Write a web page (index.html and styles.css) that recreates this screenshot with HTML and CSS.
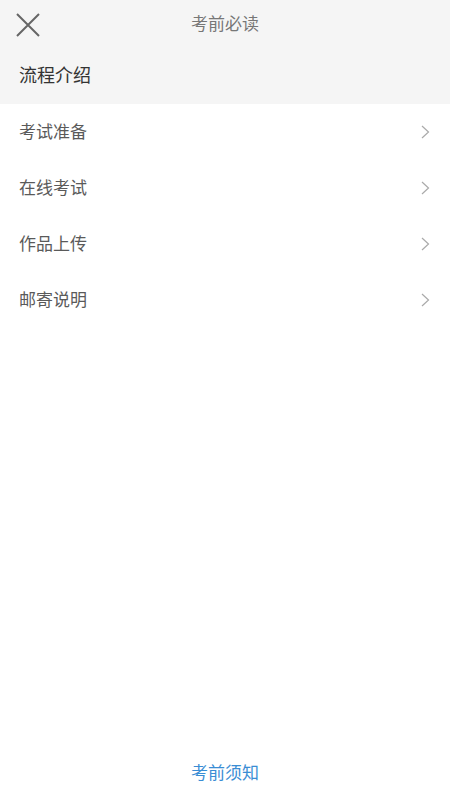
FILE: index.html
```html
<!DOCTYPE html>
<html lang="zh-CN">

<head>
    <meta charset="UTF-8">
    <meta name="viewport" content="width=device-width, initial-scale=1.0">
    <title>考前必读</title>
    <link rel="stylesheet" href="styles.css">
</head>

<body>
    <div class="page">
        <div class="top-bar">
            <span class="close-btn">
                <svg width="24" height="24" viewBox="0 0 24 24">
                    <path d="M1 1 L23 23 M23 1 L1 23" stroke="#666" stroke-width="2" fill="none" />
                </svg>
            </span>
            <h1 class="top-title">考前必读</h1>
        </div>

        <div class="section-head">流程介绍</div>

        <ul class="menu-list">
            <li class="menu-item">
                <span>考试准备</span>
                <svg class="arrow" width="9" height="14" viewBox="0 0 9 14">
                    <path d="M1 1 L7.5 7 L1 13" stroke="#aaa" stroke-width="1.2" fill="none" />
                </svg>
            </li>
            <li class="menu-item">
                <span>在线考试</span>
                <svg class="arrow" width="9" height="14" viewBox="0 0 9 14">
                    <path d="M1 1 L7.5 7 L1 13" stroke="#aaa" stroke-width="1.2" fill="none" />
                </svg>
            </li>
            <li class="menu-item">
                <span>作品上传</span>
                <svg class="arrow" width="9" height="14" viewBox="0 0 9 14">
                    <path d="M1 1 L7.5 7 L1 13" stroke="#aaa" stroke-width="1.2" fill="none" />
                </svg>
            </li>
            <li class="menu-item">
                <span>邮寄说明</span>
                <svg class="arrow" width="9" height="14" viewBox="0 0 9 14">
                    <path d="M1 1 L7.5 7 L1 13" stroke="#aaa" stroke-width="1.2" fill="none" />
                </svg>
            </li>
        </ul>

        <div class="footer-link">考前须知</div>
    </div>
</body>

</html>
```

FILE: styles.css
```css
body {
    margin: 0;
    padding: 0;
    background-color: #fff;
    font-family: 'Noto Sans CJK SC', 'Noto Sans', sans-serif;
}

.page {
    display: flex;
    flex-direction: column;
    height: 800px;
}

.top-bar {
    position: relative;
    height: 48px;
    box-sizing: border-box;
    padding-bottom: 3px;
    display: flex;
    align-items: center;
    justify-content: center;
    background-color: #f5f5f5;
}

.close-btn {
    position: absolute;
    left: 16px;
    top: 13px;
    width: 24px;
    height: 24px;
}

.top-title {
    margin: 0;
    font-size: 17px;
    font-weight: normal;
    color: #777;
}

.section-head {
    height: 56px;
    box-sizing: border-box;
    line-height: 52px;
    padding: 0 0 4px 19px;
    font-size: 18px;
    color: #333;
    background-color: #f5f5f5;
}

.menu-list {
    list-style: none;
    margin: 0;
    padding: 0;
}

.menu-item {
    height: 56px;
    box-sizing: border-box;
    display: flex;
    align-items: center;
    justify-content: space-between;
    padding: 0 19px 4px;
    font-size: 17px;
    color: #5a5a5a;
}

.arrow {
    margin: 4px 1px 0 0;
}

.footer-link {
    margin-top: auto;
    height: 56px;
    line-height: 56px;
    text-align: center;
    font-size: 17px;
    color: #3a8dd4;
}
```
